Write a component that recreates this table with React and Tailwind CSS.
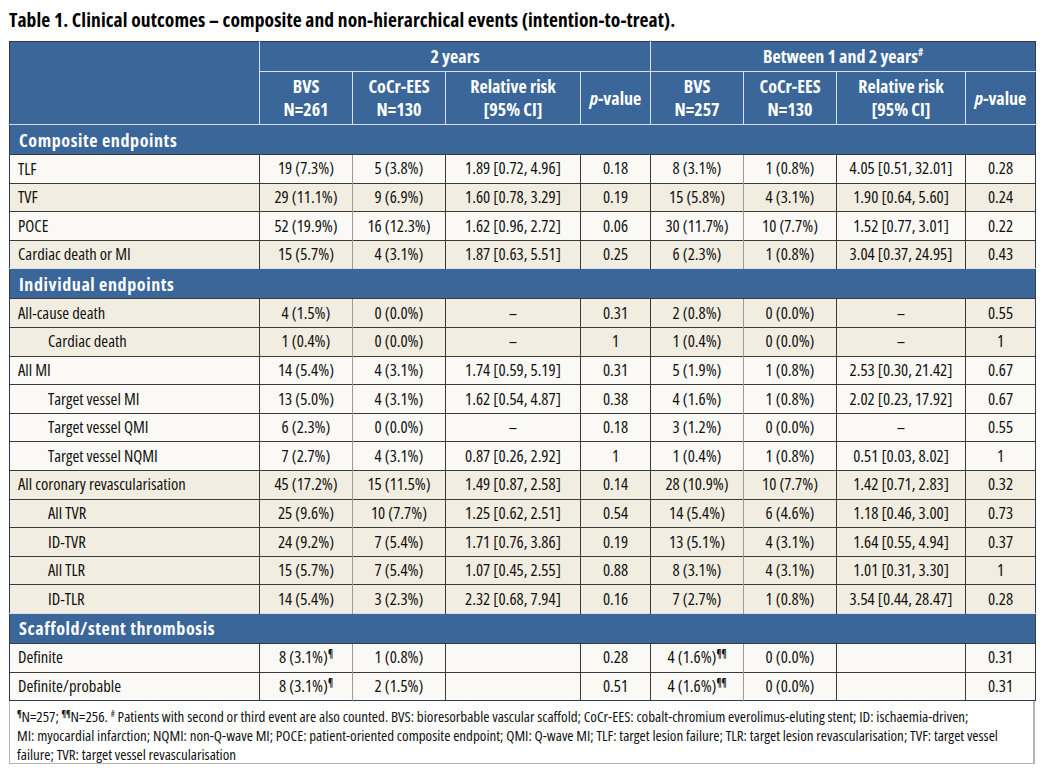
import React from 'react';

const LIGHT = 'bg-[#faf9f5]';
const BEIGE = 'bg-[#f1ede0]';

const sections = [
  {
    title: 'Composite endpoints',
    rows: [
      ['TLF', 0, LIGHT, ['19 (7.3%)', '5 (3.8%)', '1.89 [0.72, 4.96]', '0.18', '8 (3.1%)', '1 (0.8%)', '4.05 [0.51, 32.01]', '0.28']],
      ['TVF', 0, BEIGE, ['29 (11.1%)', '9 (6.9%)', '1.60 [0.78, 3.29]', '0.19', '15 (5.8%)', '4 (3.1%)', '1.90 [0.64, 5.60]', '0.24']],
      ['POCE', 0, LIGHT, ['52 (19.9%)', '16 (12.3%)', '1.62 [0.96, 2.72]', '0.06', '30 (11.7%)', '10 (7.7%)', '1.52 [0.77, 3.01]', '0.22']],
      ['Cardiac death or MI', 0, BEIGE, ['15 (5.7%)', '4 (3.1%)', '1.87 [0.63, 5.51]', '0.25', '6 (2.3%)', '1 (0.8%)', '3.04 [0.37, 24.95]', '0.43']],
    ],
  },
  {
    title: 'Individual endpoints',
    rows: [
      ['All-cause death', 0, BEIGE, ['4 (1.5%)', '0 (0.0%)', '–', '0.31', '2 (0.8%)', '0 (0.0%)', '–', '0.55']],
      ['Cardiac death', 1, BEIGE, ['1 (0.4%)', '0 (0.0%)', '–', '1', '1 (0.4%)', '0 (0.0%)', '–', '1']],
      ['All MI', 0, LIGHT, ['14 (5.4%)', '4 (3.1%)', '1.74 [0.59, 5.19]', '0.31', '5 (1.9%)', '1 (0.8%)', '2.53 [0.30, 21.42]', '0.67']],
      ['Target vessel MI', 1, LIGHT, ['13 (5.0%)', '4 (3.1%)', '1.62 [0.54, 4.87]', '0.38', '4 (1.6%)', '1 (0.8%)', '2.02 [0.23, 17.92]', '0.67']],
      ['Target vessel QMI', 1, LIGHT, ['6 (2.3%)', '0 (0.0%)', '–', '0.18', '3 (1.2%)', '0 (0.0%)', '–', '0.55']],
      ['Target vessel NQMI', 1, LIGHT, ['7 (2.7%)', '4 (3.1%)', '0.87 [0.26, 2.92]', '1', '1 (0.4%)', '1 (0.8%)', '0.51 [0.03, 8.02]', '1']],
      ['All coronary revascularisation', 0, BEIGE, ['45 (17.2%)', '15 (11.5%)', '1.49 [0.87, 2.58]', '0.14', '28 (10.9%)', '10 (7.7%)', '1.42 [0.71, 2.83]', '0.32']],
      ['All TVR', 1, BEIGE, ['25 (9.6%)', '10 (7.7%)', '1.25 [0.62, 2.51]', '0.54', '14 (5.4%)', '6 (4.6%)', '1.18 [0.46, 3.00]', '0.73']],
      ['ID-TVR', 1, BEIGE, ['24 (9.2%)', '7 (5.4%)', '1.71 [0.76, 3.86]', '0.19', '13 (5.1%)', '4 (3.1%)', '1.64 [0.55, 4.94]', '0.37']],
      ['All TLR', 1, BEIGE, ['15 (5.7%)', '7 (5.4%)', '1.07 [0.45, 2.55]', '0.88', '8 (3.1%)', '4 (3.1%)', '1.01 [0.31, 3.30]', '1']],
      ['ID-TLR', 1, BEIGE, ['14 (5.4%)', '3 (2.3%)', '2.32 [0.68, 7.94]', '0.16', '7 (2.7%)', '1 (0.8%)', '3.54 [0.44, 28.47]', '0.28']],
    ],
  },
  {
    title: 'Scaffold/stent thrombosis',
    rows: [
      ['Definite', 0, LIGHT, ['8 (3.1%)|¶', '1 (0.8%)', '', '0.28', '4 (1.6%)|¶¶', '0 (0.0%)', '', '0.31']],
      ['Definite/probable', 0, LIGHT, ['8 (3.1%)|¶', '2 (1.5%)', '', '0.51', '4 (1.6%)|¶¶', '0 (0.0%)', '', '0.31']],
    ],
  },
];

// left border colour of each value column (BVS|CoCr divider is lighter)
const cellBorder = [
  'border-l-[#3a3a3a]',
  'border-l-[#9a9a9a]',
  'border-l-[#3a3a3a]',
  'border-l-[#3a3a3a]',
  'border-l-[#3a3a3a]',
  'border-l-[#9a9a9a]',
  'border-l-[#3a3a3a]',
  'border-l-[#3a3a3a]',
];

const Value = ({ text }) => {
  const [v, mark] = text.split('|');
  return (
    <>
      {v}
      {mark && <sup className="text-[10px] font-bold top-[-0.6em]">{mark}</sup>}
    </>
  );
};

const HeadCell = ({ top, bottom }) => (
  <th className="border-t border-l border-[#d6dfea] font-bold text-white text-[18px] leading-[23px] text-center align-middle">
    {top}
    <br />
    {bottom}
  </th>
);

const App = () => {
  return (
    <div className="bg-white w-[1062px] h-[781px] pl-[9px] pt-[8px] font-['Open_Sans',sans-serif] [font-stretch:75%] text-[#111]">
      <h1 className="text-[19.5px] leading-[24px] font-bold tracking-[0.1px] text-black whitespace-nowrap">
        Table 1. Clinical outcomes – composite and non-hierarchical events (intention-to-treat).
      </h1>

      <div className="mt-[9px] w-[1026px]">
        <table className="table-fixed w-full border-collapse border border-[#2f3b4c]">
          <colgroup>
            <col className="w-[250px]" />
            <col className="w-[93px]" />
            <col className="w-[93px]" />
            <col className="w-[135px]" />
            <col className="w-[70px]" />
            <col className="w-[93px]" />
            <col className="w-[93px]" />
            <col className="w-[129px]" />
            <col className="w-[70px]" />
          </colgroup>
          <thead className="bg-[#3a6699]">
            <tr className="h-[30px]">
              <th rowSpan={2} className="border-r border-[#d6dfea]"></th>
              <th colSpan={4} className="border-b border-r border-[#d6dfea] font-bold text-white text-[18px] text-center">
                2 years
              </th>
              <th colSpan={4} className="border-b border-[#d6dfea] font-bold text-white text-[18px] text-center">
                Between 1 and 2 years<sup className="text-[10px] top-[-0.7em]">#</sup>
              </th>
            </tr>
            <tr className="h-[53px]">
              <HeadCell top="BVS" bottom="N=261" />
              <HeadCell top="CoCr-EES" bottom="N=130" />
              <HeadCell top="Relative risk" bottom="[95% CI]" />
              <th className="border-t border-l border-[#d6dfea] font-bold text-white text-[18px] text-center">
                <i>p</i>-value
              </th>
              <HeadCell top="BVS" bottom="N=257" />
              <HeadCell top="CoCr-EES" bottom="N=130" />
              <HeadCell top="Relative risk" bottom="[95% CI]" />
              <th className="border-t border-l border-[#d6dfea] font-bold text-white text-[18px] text-center">
                <i>p</i>-value
              </th>
            </tr>
          </thead>
          {sections.map((sec) => (
            <tbody key={sec.title}>
              <tr className="h-[30px] bg-[#3a6699]">
                <td
                  colSpan={9}
                  className="border-t border-[#d6dfea] pl-[9px] text-white font-bold text-[18px] tracking-[0.6px] leading-none"
                >
                  {sec.title}
                </td>
              </tr>
              {sec.rows.map(([label, indent, bg, vals]) => (
                <tr key={label} className={`h-[28.6px] ${bg}`}>
                  <td
                    className={`border-t border-[#3a3a3a] text-[16.6px] leading-none text-[#111] ${indent ? 'pl-[38px]' : 'pl-[8px]'}`}
                  >
                    {label}
                  </td>
                  {vals.map((v, i) => (
                    <td
                      key={i}
                      className={`border-t border-t-[#3a3a3a] border-l ${cellBorder[i]} text-center text-[16.8px] leading-none text-[#111] whitespace-nowrap`}
                    >
                      <Value text={v} />
                    </td>
                  ))}
                </tr>
              ))}
            </tbody>
          ))}
        </table>

        <div className="border border-t-0 border-[#b4b4b4] border-r-2 bg-white h-[63px] pl-[7px] pt-[6px] text-[15px] leading-[19px] text-[#111] whitespace-nowrap">
          <sup className="text-[9px] font-bold top-[-0.6em]">¶</sup>N=257;{' '}
          <sup className="text-[9px] font-bold top-[-0.6em]">¶¶</sup>N=256.{' '}
          <sup className="text-[9px] top-[-0.6em]">#</sup> Patients with second or third event are also counted. BVS: bioresorbable vascular
          scaffold; CoCr-EES: cobalt-chromium everolimus-eluting stent; ID: ischaemia-driven;
          <br />
          MI: myocardial infarction; NQMI: non-Q-wave MI; POCE: patient-oriented composite endpoint; QMI: Q-wave MI; TLF: target
          lesion failure; TLR: target lesion revascularisation; TVF: target vessel
          <br />
          failure; TVR: target vessel revascularisation
        </div>
      </div>
    </div>
  );
};

export default App;
